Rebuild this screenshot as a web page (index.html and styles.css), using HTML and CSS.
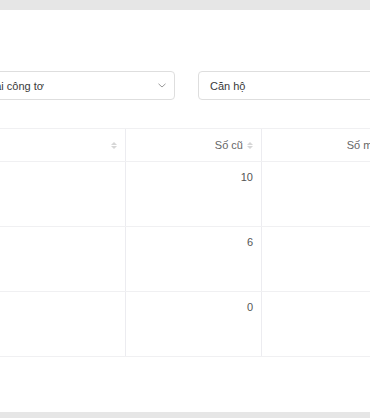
FILE: index.html
```html
<!DOCTYPE html>
<html lang="vi">
<head>
<meta charset="utf-8">
<link rel="stylesheet" href="styles.css">
</head>
<body>
<div class="topbar"></div>
<main class="panel">
  <div class="content">
    <div class="filters">
      <div class="select">
        <span class="select-text">Loại công tơ</span>
        <svg class="chevron" width="8" height="5" viewBox="0 0 8 5"><path d="M0.5 0.8 L4 4 L7.5 0.8" fill="none" stroke="#9a9a9a" stroke-width="1"/></svg>
      </div>
      <div class="input">Căn hộ</div>
    </div>
    <div class="table">
      <div class="row head">
        <div class="cell"><span class="sort"><i class="up"></i><i class="down"></i></span></div>
        <div class="cell">Số cũ<span class="sort"><i class="up"></i><i class="down"></i></span></div>
        <div class="cell">Số mới<span class="sort"><i class="up"></i><i class="down"></i></span></div>
      </div>
      <div class="row">
        <div class="cell"></div>
        <div class="cell">10</div>
        <div class="cell"></div>
      </div>
      <div class="row">
        <div class="cell"></div>
        <div class="cell">6</div>
        <div class="cell"></div>
      </div>
      <div class="row">
        <div class="cell"></div>
        <div class="cell">0</div>
        <div class="cell"></div>
      </div>
    </div>
  </div>
</main>
<div class="bottombar"></div>
</body>
</html>
```
FILE: styles.css
```css
html, body {
  margin: 0;
  padding: 0;
  width: 370px;
  height: 418px;
  overflow: hidden;
  background: #fff;
  font-family: "Liberation Sans", Arial, sans-serif;
  font-size: 11px;
}
.topbar {
  height: 10px;
  background: #e6e6e6;
}
.bottombar {
  height: 6px;
  background: #e6e6e6;
}
.panel {
  height: 402px;
  background: #fff;
  overflow: hidden;
}
.content {
  margin-left: -30px;
  width: 600px;
  padding-top: 61px;
}
.filters {
  display: flex;
  gap: 23px;
  height: 29px;
}
.select, .input {
  box-sizing: border-box;
  height: 29px;
  border: 1px solid #dedede;
  border-radius: 4px;
  display: flex;
  align-items: center;
  color: #3a3a3a;
}
.select {
  width: 205px;
  padding: 0 8px 0 12px;
  justify-content: space-between;
}
.input {
  width: 250px;
  padding: 0 11px;
}
.table {
  margin-top: 28px;
  border-top: 1px solid #f0f0f2;
}
.row {
  display: grid;
  grid-template-columns: 156px 136px 139px;
  height: 65px;
  box-sizing: border-box;
  border-bottom: 1px solid #f0f0f2;
}
.row.head {
  height: 33px;
}
.cell {
  box-sizing: border-box;
  border-right: 1px solid #ececf0;
  padding: 9px 8px 0 8px;
  text-align: right;
  color: #555555;
  display: flex;
  justify-content: flex-end;
  align-items: flex-start;
  white-space: nowrap;
}
.head .cell {
  padding-top: 0;
  align-items: center;
  color: #666666;
}
.sort {
  display: inline-flex;
  flex-direction: column;
  gap: 1px;
  margin-left: 4px;
}
.sort i {
  width: 0;
  height: 0;
  border-left: 3px solid transparent;
  border-right: 3px solid transparent;
}
.sort .up {
  border-bottom: 3px solid #d6d6d6;
}
.sort .down {
  border-top: 3px solid #d6d6d6;
}
```
